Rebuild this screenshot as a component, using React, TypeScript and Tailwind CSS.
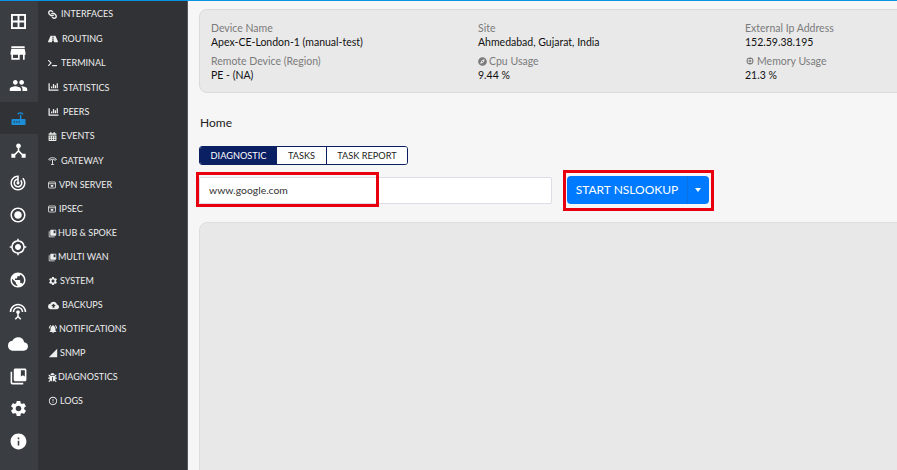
import type { ReactNode } from 'react';
import {
  FaChartBar, FaCalendarAlt, FaBug, FaCompass, FaLink, FaRoad, FaTerminal,
} from 'react-icons/fa';
import {
  MdBackup, MdCloud, MdCollectionsBookmark, MdDeviceHub, MdErrorOutline, MdGpsFixed, MdInfo, MdMemory,
  MdNotificationsActive, MdPeople, MdPublic, MdRadioButtonChecked, MdSettings, MdSettingsInputAntenna,
  MdSignalCellular4Bar, MdStore, MdTrackChanges,
} from 'react-icons/md';

function Router({ className }: { className?: string }) {
  return (
    <svg viewBox="0 0 16 16" className={className} fill="currentColor">
      <rect x="0.5" y="8.5" width="15" height="6.5" rx="1" />
      <rect x="9.5" y="4" width="1.5" height="5" />
      <path d="M6.6 3a5 5 0 0 1 6.8 0l-.9.9a3.7 3.7 0 0 0-5 0z" />
      <rect x="3" y="11" width="1.3" height="1.3" fill="#303236" />
      <rect x="5.6" y="11" width="1.3" height="1.3" fill="#303236" />
      <rect x="8.2" y="11" width="1.3" height="1.3" fill="#303236" />
    </svg>
  );
}

function Grid({ className }: { className?: string }) {
  return (
    <svg viewBox="0 0 16 16" className={className} fill="none" stroke="currentColor" strokeWidth="2">
      <rect x="1" y="1" width="14" height="14" />
      <path d="M8 1v14M1 8h14" />
    </svg>
  );
}

function Gateway({ className }: { className?: string }) {
  return (
    <svg viewBox="0 0 16 16" className={className} fill="none" stroke="currentColor" strokeWidth="1.6">
      <path d="M1 6c3-4 11-4 14 0l-2.5 1.5c-2.5-2-6.5-2-9 0z" />
      <path d="M8 7v8M5.5 15h5" />
    </svg>
  );
}

function Vpn({ className }: { className?: string }) {
  return (
    <svg viewBox="0 0 16 16" className={className} fill="none" stroke="currentColor" strokeWidth="1.6">
      <rect x="1" y="2" width="14" height="12" rx="1" />
      <path d="M1 5.5h14" />
      <rect x="5.5" y="8" width="5" height="3.5" fill="currentColor" stroke="none" />
    </svg>
  );
}

const railIcons: { icon: ReactNode; active?: boolean }[] = [
  { icon: <Grid className="h-[15px] w-[15px]" /> },
  { icon: <MdStore className="h-[20px] w-[20px]" /> },
  { icon: <MdPeople className="h-[19px] w-[19px]" /> },
  { icon: <Router className="h-[15px] w-[15px]" />, active: true },
  { icon: <MdDeviceHub className="h-[19px] w-[19px]" /> },
  { icon: <MdTrackChanges className="h-[18px] w-[18px]" /> },
  { icon: <MdRadioButtonChecked className="h-[18px] w-[18px]" /> },
  { icon: <MdGpsFixed className="h-[18px] w-[18px]" /> },
  { icon: <MdPublic className="h-[18px] w-[18px]" /> },
  { icon: <MdSettingsInputAntenna className="h-[18px] w-[18px]" /> },
  { icon: <MdCloud className="h-[20px] w-[20px]" /> },
  { icon: <MdCollectionsBookmark className="h-[19px] w-[19px]" /> },
  { icon: <MdSettings className="h-[19px] w-[19px]" /> },
  { icon: <MdInfo className="h-[19px] w-[19px]" /> },
];

const menu: { label: string; icon: ReactNode; box: string }[] = [
  { label: 'INTERFACES', box: 'w-[13px]', icon: <FaLink className="h-[9px] w-[9px] rotate-90" /> },
  { label: 'ROUTING', box: 'w-[14px]', icon: <FaRoad className="h-[10px] w-[10px]" /> },
  { label: 'TERMINAL', box: 'w-[13px]', icon: <FaTerminal className="h-[8px] w-[9px]" /> },
  { label: 'STATISTICS', box: 'w-[15px]', icon: <FaChartBar className="h-[10px] w-[11px]" /> },
  { label: 'PEERS', box: 'w-[15px]', icon: <FaChartBar className="h-[10px] w-[11px]" /> },
  { label: 'EVENTS', box: 'w-[13px]', icon: <FaCalendarAlt className="h-[9px] w-[9px]" /> },
  { label: 'GATEWAY', box: 'w-[13px]', icon: <Gateway className="h-[9px] w-[9px]" /> },
  { label: 'VPN SERVER', box: 'w-[11px]', icon: <Vpn className="h-[8px] w-[8px]" /> },
  { label: 'IPSEC', box: 'w-[11px]', icon: <Vpn className="h-[8px] w-[8px]" /> },
  { label: 'HUB & SPOKE', box: 'w-[10px]', icon: <MdCollectionsBookmark className="h-[9px] w-[9px]" /> },
  { label: 'MULTI WAN', box: 'w-[10px]', icon: <MdCollectionsBookmark className="h-[9px] w-[9px]" /> },
  { label: 'SYSTEM', box: 'w-[12px]', icon: <MdSettings className="h-[10px] w-[10px]" /> },
  { label: 'BACKUPS', box: 'w-[14px]', icon: <MdBackup className="h-[11px] w-[11px]" /> },
  { label: 'NOTIFICATIONS', box: 'w-[11px]', icon: <MdNotificationsActive className="h-[10px] w-[10px]" /> },
  { label: 'SNMP', box: 'w-[12px]', icon: <MdSignalCellular4Bar className="h-[10px] w-[10px]" /> },
  { label: 'DIAGNOSTICS', box: 'w-[10px]', icon: <FaBug className="h-[9px] w-[9px]" /> },
  { label: 'LOGS', box: 'w-[12px]', icon: <MdErrorOutline className="h-[10px] w-[10px]" /> },
];

function Info({ label, value, icon }: { label: string; value: string; icon?: ReactNode }) {
  return (
    <div>
      <div className="flex h-[14px] items-center gap-[2px] text-[10.5px] leading-[14px] text-[#7b7b7b]">{icon}{label}</div>
      <div className="h-[14px] text-[10.5px] leading-[14px] text-[#111]">{value}</div>
    </div>
  );
}

export default function App() {
  return (
    <div className="flex h-[470px] w-[897px] overflow-hidden border-t-[1px] border-[#0a93e0] bg-[#f6f6f6] font-['Lato',sans-serif]">
      {/* icon rail */}
      <aside className="flex w-[38px] shrink-0 flex-col bg-[#3a3d42] pt-[4px] text-white">
        {railIcons.map((r, i) => (
          <div key={i} className={`flex h-[32.3px] items-center justify-center pr-[2px] ${r.active ? 'bg-[#303236] text-[#1c8ed8]' : ''}`}>
            {r.icon}
          </div>
        ))}
      </aside>

      {/* sub menu */}
      <nav className="w-[150px] shrink-0 border-r border-[#55585c] bg-[#303236] pl-[10px] pt-[1px] text-[#eee]">
        {menu.map((m, i) => (
          <div key={m.label} className={`flex items-center text-[9px] ${i < 8 ? 'h-[24.4px]' : 'h-[24px]'}`}>
            <span className={`flex ${m.box}`}>{m.icon}</span>
            {m.label}
          </div>
        ))}
      </nav>

      <main className="relative min-w-0 flex-1 pl-[11px]">
        <section className="mt-[8px] grid h-[84px] w-[720px] grid-cols-[267px_267px_1fr] content-start gap-y-[5px] rounded-l-[8px] border border-[#dadada] bg-[#e9e9e9] px-[11px] pt-[11px]">
          <Info label="Device Name" value="Apex-CE-London-1 (manual-test)" />
          <Info label="Site" value="Ahmedabad, Gujarat, India" />
          <Info label="External Ip Address" value="152.59.38.195" />
          <Info label="Remote Device (Region)" value="PE - (NA)" />
          <Info label="Cpu Usage" value="9.44 %" icon={<FaCompass className="h-[9px] w-[9px]" />} />
          <Info label="Memory Usage" value="21.3 %" icon={<MdMemory className="h-[10px] w-[10px]" />} />
        </section>

        <h2 className="ml-px mt-[22px] text-[12px] leading-[16px] text-[#222]">Home</h2>

        <div className="mt-[15px] flex h-[19px] w-[209px] overflow-hidden rounded-[3px] border border-[#0b1f63] text-[9.2px] leading-[17px] text-[#222]">
          <span className="w-[77px] bg-[#0b1f63] text-center text-white">DIAGNOSTIC</span>
          <span className="w-[50px] border-r border-[#0b1f63] bg-white text-center">TASKS</span>
          <span className="w-[80px] bg-white text-center">TASK REPORT</span>
        </div>

        <div className="mt-[11px] flex items-center">
          <input
            readOnly
            value="www.google.com"
            className="h-[27px] w-[353px] rounded-[2px] border border-[#dcdde6] bg-white pl-[9px] text-[10.4px] text-[#333] outline-none"
          />
          <div className="ml-[15px] flex h-[28px] w-[142px] items-center rounded-[4px] bg-[#007bff] text-[12px] text-white">
            <span className="w-[121px] border-r border-[#0b72e0] text-center leading-[28px]">START NSLOOKUP</span>
            <span className="ml-[7px] h-0 w-0 border-x-[3.5px] border-t-[4px] border-x-transparent border-t-white" />
          </div>
        </div>

        <section className="mt-[18px] h-[260px] w-[720px] rounded-l-[8px] border border-[#dedede] bg-[#e8e8e8]" />

        {/* red annotation boxes */}
        <div className="absolute left-[8px] top-[171px] h-[35px] w-[183px] border-[3px] border-[#e8000f]" />
        <div className="absolute left-[375px] top-[169px] h-[41px] w-[151px] border-[3px] border-[#e8000f]" />
      </main>
    </div>
  );
}
